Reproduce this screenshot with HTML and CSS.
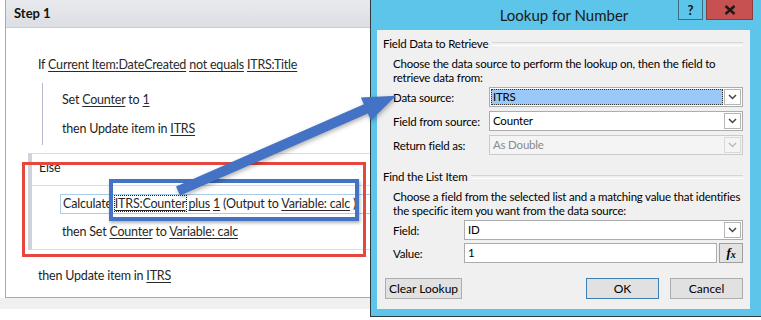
FILE: index.html
```html
<!DOCTYPE html>
<html lang="en">

<head>
    <meta charset="UTF-8">
    <title>Step 1 - Lookup for Number</title>
    <link rel="stylesheet" href="styles.css">
</head>

<body>
    <!-- Workflow designer -->
    <div class="designer">
        <div class="step">
            <div class="step-head">Step 1</div>
            <div class="step-body">
                <div class="cond">If <a>Current Item:DateCreated</a> <a>not equals</a> <a>ITRS:Title</a></div>
                <div class="branch">
                    <div class="action">Set <a>Counter</a> to <a>1</a></div>
                    <div class="action next">then Update item in <a>ITRS</a></div>
                </div>
                <div class="else-block">
                    <div class="else-head">Else</div>
                    <div class="else-body">
                        <div class="action calc">Calculate <span class="focus"><a>ITRS:Counter</a></span> <a>plus</a> <a>1</a> (Output to <a>Variable: calc</a> )</div>
                        <div class="action then-set">then Set <a>Counter</a> to <a>Variable: calc</a></div>
                    </div>
                </div>
                <div class="cond last">then Update item in <a>ITRS</a></div>
            </div>
        </div>
        <div class="shade"></div>
        <div class="mark mark-red"></div>
        <div class="mark mark-blue"></div>
    </div>

    <!-- Lookup dialog -->
    <div class="dialog">
        <div class="titlebar">
            <div class="title">Lookup for Number</div>
            <div class="cap-btn cap-help">?</div>
            <div class="cap-btn cap-close">
                <svg width="12" height="10" viewBox="0 0 12 10"><path d="M1.5 1 L10.5 9 M10.5 1 L1.5 9" stroke="#1a1a1a" stroke-width="2.4"/></svg>
            </div>
        </div>
        <div class="client">
            <div class="legend">Field Data to Retrieve</div>
            <div class="group">
                <p class="desc">Choose the data source to perform the lookup on, then the field to<br>retrieve data from:</p>
                <div class="form form-wide">
                    <label>Data source:</label>
                    <div class="select">
                        <span class="value selected">ITRS</span>
                        <span class="drop"><svg width="9" height="6" viewBox="0 0 9 6"><path d="M1 1 L4.5 4.5 L8 1" fill="none" stroke="#444" stroke-width="1.5"/></svg></span>
                    </div>
                    <label>Field from source:</label>
                    <div class="select">
                        <span class="value">Counter</span>
                        <span class="drop"><svg width="9" height="6" viewBox="0 0 9 6"><path d="M1 1 L4.5 4.5 L8 1" fill="none" stroke="#444" stroke-width="1.5"/></svg></span>
                    </div>
                    <label>Return field as:</label>
                    <div class="select disabled">
                        <span class="value">As Double</span>
                        <span class="drop"><svg width="9" height="6" viewBox="0 0 9 6"><path d="M1 1 L4.5 4.5 L8 1" fill="none" stroke="#bbb" stroke-width="1.5"/></svg></span>
                    </div>
                </div>
            </div>

            <div class="legend second">Find the List Item</div>
            <div class="group">
                <p class="desc">Choose a field from the selected list and a matching value that identifies<br>the specific item you want from the data source:</p>
                <div class="form form-narrow">
                    <label>Field:</label>
                    <div class="select">
                        <span class="value">ID</span>
                        <span class="drop"><svg width="9" height="6" viewBox="0 0 9 6"><path d="M1 1 L4.5 4.5 L8 1" fill="none" stroke="#444" stroke-width="1.5"/></svg></span>
                    </div>
                    <label>Value:</label>
                    <div class="value-row">
                        <div class="textbox">1</div>
                        <div class="fx-btn"><i>f</i><i class="x">x</i></div>
                    </div>
                </div>
            </div>

            <div class="buttons">
                <div class="btn">Clear Lookup</div>
                <div class="spacer"></div>
                <div class="btn default">OK</div>
                <div class="btn">Cancel</div>
            </div>
        </div>
    </div>

    <!-- Annotation arrow -->
    <svg class="arrow" width="761" height="320" viewBox="0 0 761 320">
        <g transform="translate(178 191) rotate(-23.6)">
            <path d="M0 -5 L205 -5 L205 -12.5 L238 0 L205 12.5 L205 5 L0 5 Z" fill="#4472c4"/>
        </g>
    </svg>
</body>

</html>
```

FILE: styles.css
```css
/* Reset */
* {
    margin: 0;
    padding: 0;
    box-sizing: border-box;
}

body {
    width: 761px;
    height: 320px;
    overflow: hidden;
    position: relative;
    background: #ffffff;
    font-family: Lato, "Noto Sans", sans-serif;
    color: #1e1e1e;
}

a {
    color: #2a2a2a;
    text-decoration: underline;
    text-underline-offset: 2px;
}

/* Designer */
.designer {
    position: relative;
    height: 320px;
}

.step {
    margin-left: 5px;
    width: 420px;
    height: 298px;
    background: #ffffff;
    border-left: 1px solid #a9a9a9;
    border-bottom: 1px solid #a9a9a9;
    font-size: 12.5px;
    letter-spacing: -0.2px;
}

.step-head {
    height: 28px;
    line-height: 27px;
    padding-left: 8px;
    font-size: 13px;
    font-weight: bold;
    letter-spacing: 0;
    color: #111;
    background: linear-gradient(#e9eaed, #dcdee3);
    border-bottom: 1px solid #c9ccd2;
}

.step-body {
    padding: 28px 0 0 22px;
}

.cond,
.action {
    line-height: 18px;
    white-space: nowrap;
}

.cond {
    padding-left: 10px;
}

.branch {
    margin: 9px 0 0 14px;
    padding: 8px 0 7px 19px;
    border-left: 1px solid #b8b9cc;
}

.branch .next {
    margin-top: 11px;
}

/* Else block */
.else-block {
    margin-top: 8px;
    border-top: 1px solid #dcdcdc;
    border-bottom: 1px solid #dcdcdc;
    border-left: 4px solid #cfd2da;
}

.else-head {
    padding: 5px 0 8px 7px;
    line-height: 18px;
    border-bottom: 1px solid #dcdcdc;
}

.else-body {
    padding: 8px 0 8px 28px;
}

.calc {
    border: 1px solid #a9cde8;
    border-right: none;
    padding-left: 2px;
}

.focus {
    outline: 1px dotted #222;
    outline-offset: 0;
}

.then-set {
    margin-top: 9px;
    padding-left: 2px;
}

.cond.last {
    margin-top: 17px;
}

.shade {
    height: 11px;
    background: #f0f0f0;
}

/* Annotation marks */
.mark {
    position: absolute;
}

.mark-red {
    left: 22px;
    top: 162px;
    width: 344px;
    height: 95px;
    border: 3px solid #e5463e;
}

.mark-blue {
    left: 109px;
    top: 179px;
    width: 250px;
    height: 42px;
    border: 4px solid #4472c4;
    box-shadow: 1px 2px 3px rgba(0, 0, 0, 0.3);
}

/* Dialog */
.dialog {
    position: absolute;
    left: 370px;
    top: 0;
    width: 400px;
    height: 317px;
    background: #5dc5e9;
    border-left: 1px solid #2d3a40;
    border-bottom: 1px solid #2d3a40;
    border-right: 1px solid #2d3a40;
    font-size: 11.5px;
    letter-spacing: -0.2px;
    color: #000;
}

.titlebar {
    display: flex;
    height: 30px;
}

.title {
    flex: 1;
    padding-left: 79px;
    text-align: center;
    line-height: 30px;
    font-size: 15px;
    letter-spacing: 0;
    color: #1a1a1a;
}

.cap-btn {
    height: 20px;
    border: 1px solid #3a6f83;
    border-top: none;
    display: flex;
    align-items: center;
    justify-content: center;
}

.cap-help {
    width: 25px;
    margin-right: 3px;
    font-weight: bold;
    font-size: 13px;
    color: #111;
}

.cap-close {
    width: 47px;
    margin-right: 16px;
    background: #c75050;
    border-color: #8e3a3a;
}

.client {
    margin-left: 6px;
    width: 373px;
    height: 279px;
    padding: 6px 7px 0 6px;
    background: #f0f0f0;
    white-space: nowrap;
}

.legend {
    display: flex;
    align-items: center;
    line-height: 16px;
}

.legend::after {
    content: "";
    flex: 1;
    height: 2px;
    margin-left: 4px;
    border-top: 1px solid #d5d5d5;
    border-bottom: 1px solid #ffffff;
}

.legend.second {
    margin-top: 14px;
}

.group {
    padding-left: 10px;
}

.desc {
    margin-top: 5px;
    line-height: 14px;
}

.form {
    display: grid;
    align-items: center;
    margin-top: 2px;
}

.form-wide {
    grid-template-columns: 96px 1fr;
    row-gap: 4px;
}

.form-narrow {
    grid-template-columns: 71px 1fr;
    row-gap: 3px;
}

.select {
    display: flex;
    height: 20px;
    padding: 1px;
    background: #ffffff;
    border: 1px solid #acacac;
}

.select .value {
    flex: 1;
    padding-left: 2px;
    line-height: 16px;
}

.select .selected {
    background: #99c9f9;
    outline: 1px dotted #333;
    outline-offset: -1px;
    margin-right: 1px;
}

.drop {
    width: 17px;
    display: flex;
    align-items: center;
    justify-content: center;
    border: 1px solid #b5b5b5;
    background: #ffffff;
}

.select.disabled {
    background: #f4f4f4;
    border-color: #cbcbcb;
    color: #8a8a8a;
}

.select.disabled .drop {
    background: #f4f4f4;
    border-color: #d8d8d8;
}

.value-row {
    display: flex;
    gap: 2px;
}

.textbox {
    flex: 1;
    height: 20px;
    padding-left: 3px;
    line-height: 18px;
    background: #ffffff;
    border: 1px solid #acacac;
}

.fx-btn {
    width: 24px;
    height: 20px;
    display: flex;
    align-items: center;
    justify-content: center;
    background: #e3e3e3;
    border: 1px solid #9e9e9e;
    font-family: "Liberation Serif", serif;
    font-weight: bold;
    font-size: 13px;
}

.fx-btn .x {
    font-size: 10px;
    margin-top: 3px;
}

.buttons {
    display: flex;
    gap: 11px;
    margin-top: 15px;
    padding-left: 2px;
}

.spacer {
    flex: 1;
}

.btn {
    width: 73px;
    height: 21px;
    line-height: 19px;
    text-align: center;
    font-size: 12px;
    letter-spacing: 0;
    background: #e1e1e1;
    border: 1px solid #adadad;
}

.btn:first-child {
    width: 77px;
}

.btn.default {
    border-color: #3c7fb1;
}

/* Arrow */
.arrow {
    position: absolute;
    left: 0;
    top: 0;
    pointer-events: none;
    filter: drop-shadow(1px 2px 2px rgba(0, 0, 0, 0.3));
}
```
